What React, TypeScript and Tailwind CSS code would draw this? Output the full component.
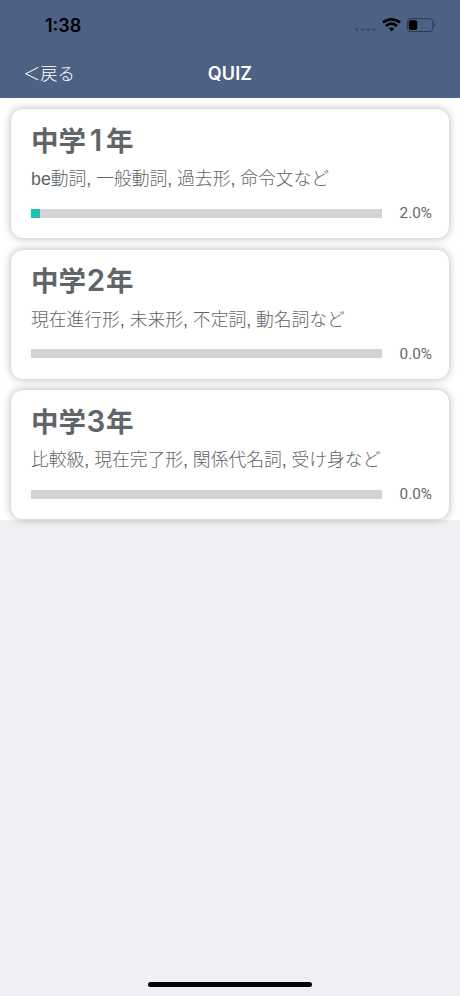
import React from "react";

const levels = [
  { grade: "1", description: "be動詞, 一般動詞, 過去形, 命令文など", progress: 2.5, label: "2.0%" },
  { grade: "2", description: "現在進行形, 未来形, 不定詞, 動名詞など", progress: 0, label: "0.0%" },
  { grade: "3", description: "比較級, 現在完了形, 関係代名詞, 受け身など", progress: 0, label: "0.0%" },
];

function StatusBar() {
  return (
    <div className="flex h-[50px] items-center justify-between pl-[45px] pr-[23px] text-black">
      <span className="text-[18px] font-semibold">1:38</span>
      <svg width="82" height="18" viewBox="0 0 82 18">
        <g fill="#3b4961" opacity="0.75">
          <circle cx="2" cy="13.5" r="1.8" /><circle cx="7.7" cy="13.5" r="1.8" /><circle cx="13.4" cy="13.5" r="1.8" /><circle cx="19" cy="13.5" r="1.8" />
        </g>
        <path d="M28 6.6C33 2.2 40 2.2 45 6.6M31 10C34.5 7.1 38.5 7.1 42 10" fill="none" stroke="black" strokeWidth="2.7" />
        <path d="M33.7 12.6Q36.5 10.3 39.3 12.6L36.5 15.5Z" />
        <rect x="52.4" y="2.7" width="25.4" height="12.8" rx="3.2" fill="none" stroke="#2c3850" />
        <rect x="53.8" y="4.2" width="8.4" height="9.8" rx="2" />
        <path d="M79.2 7Q81.5 9 79.2 11Z" fill="#2c3850" />
      </svg>
    </div>
  );
}

export default function App() {
  return (
    <div className="flex h-[996px] w-[460px] flex-col overflow-hidden bg-[#efeff4] font-['Inter','Noto_Sans_CJK_JP',sans-serif]">
      <header className="h-[98px] bg-[#4c6183]">
        <StatusBar />
        <div className="grid h-[47px] grid-cols-3 items-center text-white">
          <span className="pl-[23px] text-[17.3px] font-light">＜戻る</span>
          <h1 className="text-center text-[18px] font-semibold tracking-[0.1px]">QUIZ</h1>
        </div>
      </header>
      <main className="flex h-[422px] flex-col gap-[11.4px] bg-white px-[11px] pt-[11px]">
        {levels.map((level) => (
          <section key={level.grade} className="h-[129.2px] shrink-0 rounded-[12px] bg-white pt-[12.8px] pr-[17px] pl-5 shadow-[0_0_9px_rgba(0,0,0,0.3)]">
            <h2 className="h-9 text-[27.5px] leading-9 font-bold text-[#606569]">
              中学<span className="inline-block w-[20px] text-center text-[29.5px] font-semibold">{level.grade}</span>年
            </h2>
            <p className="mt-[9.4px] h-6 font-['Liberation_Sans','Noto_Sans_CJK_JP',sans-serif] text-[17.78px] leading-6 font-light whitespace-nowrap text-[#606468]">{level.description}</p>
            <div className="mt-[12px] flex h-5 items-center justify-between">
              <div className="h-[9px] w-[351px] bg-[#d4d4d4]">
                <div className="h-full bg-[#1cc0b2]" style={{ width: level.progress + "%" }} />
              </div>
              <span className="pt-px font-['Roboto',sans-serif] text-[15.3px] text-[#65676a]">{level.label}</span>
            </div>
          </section>
        ))}
      </main>
      <div className="mt-auto mb-[9px] h-[5.5px] w-[164px] shrink-0 self-center rounded-full bg-black" />
    </div>
  );
}
